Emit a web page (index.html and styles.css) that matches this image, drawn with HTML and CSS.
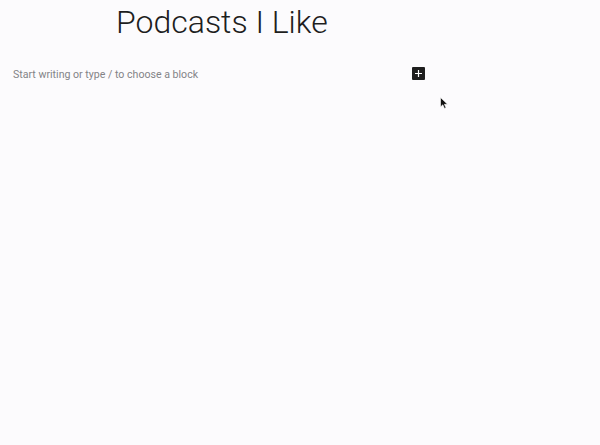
FILE: index.html
```html
<!DOCTYPE html>
<html>
<head>
<meta charset="utf-8">
<link rel="stylesheet" href="styles.css">
</head>
<body>
<div class="editor">
  <h1 class="title">Podcasts I Like</h1>
  <div class="block-row">
    <p class="placeholder">Start writing or type / to choose a block</p>
    <button class="inserter" aria-label="Add block">
      <svg width="13" height="13" viewBox="0 0 13 13"><rect width="13" height="13" rx="1" fill="#1e1e1e"/><path d="M6.5 3v7M3 6.5h7" stroke="#fff" stroke-width="1.2"/></svg>
    </button>
  </div>
  <svg class="cursor" width="9" height="13" viewBox="0 0 9 13"><path d="M0.5 0.5 L0.5 10 L2.8 7.8 L4.5 11.5 L6 10.8 L4.4 7.3 L7.5 7.3 Z" fill="#111" stroke="#fff" stroke-width="0.6"/></svg>
</div>
</body>
</html>
```
FILE: styles.css
```css
html, body {
  margin: 0;
  padding: 0;
  background: #fcfbfd;
}
.editor {
  position: relative;
  width: 600px;
  height: 445px;
  font-family: "Roboto", "Noto Sans", sans-serif;
}
.title {
  margin: 0;
  padding: 3px 0 0 116px;
  font-size: 32px;
  font-weight: 300;
  color: #1e1e1e;
  line-height: 38px;
}
.block-row {
  display: flex;
  align-items: center;
  margin-top: 26px;
  padding-left: 13px;
  width: 412px;
  justify-content: space-between;
}
.placeholder {
  margin: 0;
  font-size: 10.6px;
  color: #838387;
  line-height: 16px;
}
.inserter {
  border: 0;
  padding: 0;
  background: none;
  width: 13px;
  height: 13px;
  display: block;
  margin-top: -3px;
}
.inserter svg { display: block; }
.cursor {
  position: absolute;
  left: 440px;
  top: 97px;
}
```
